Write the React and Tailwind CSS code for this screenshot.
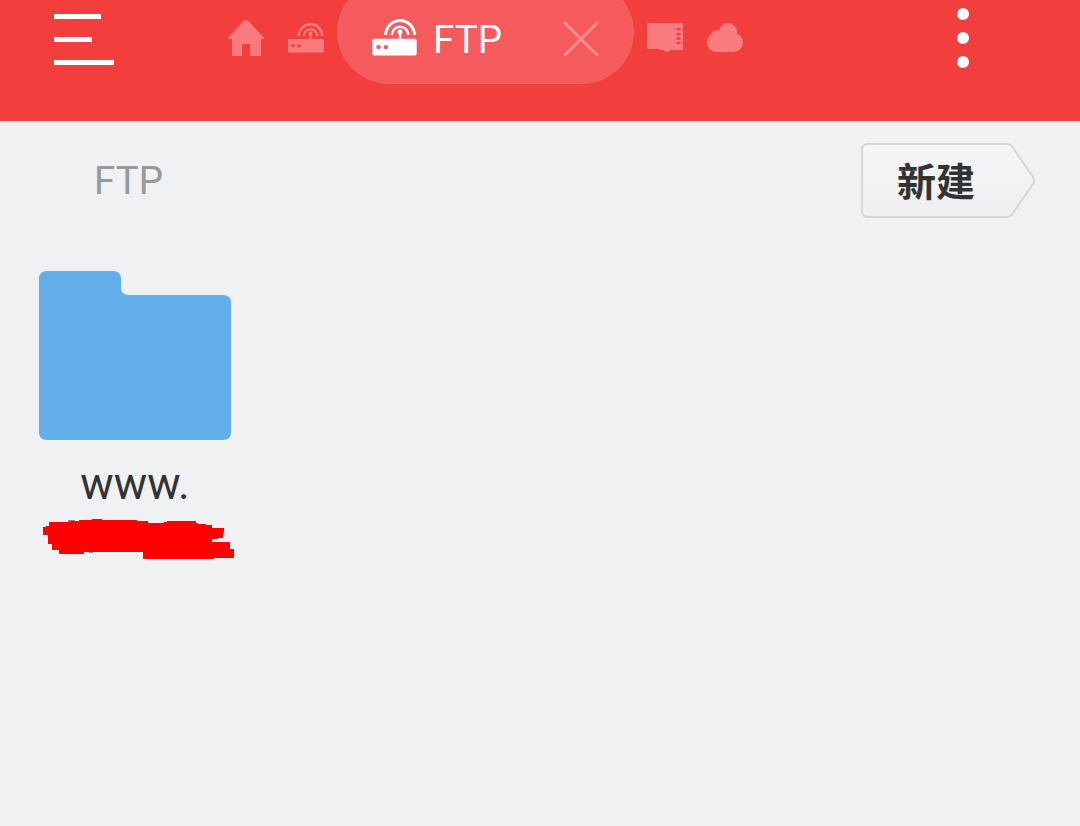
import React from 'react'

const FONT = "font-['Roboto','Noto_Sans_CJK_SC',sans-serif]"

function HomeIcon() {
  return (
    <svg width="38" height="38" viewBox="0 0 38 38" className="block" fill="#f97b7e">
      <path d="M19 1 Q20.5 1 22 2.5 L37 19 Q37.5 20 36 20 L34 20 L34 37 L23 37 L23 25 L15 25 L15 37 L5 37 L5 20 L2 20 Q0.5 20 1 19 L16 2.5 Q17.5 1 19 1 Z" />
    </svg>
  )
}

function RouterIcon({ width, height, className }) {
  return (
    <svg width={width} height={height} viewBox="0 0 36 30" className={`block ${className}`} fill="none">
      <rect x="0" y="16" width="36" height="13.5" rx="1.5" fill="currentColor" />
      <rect x="21.5" y="10" width="2" height="7" fill="currentColor" />
      <circle cx="22.5" cy="10.5" r="2" fill="currentColor" />
      <path d="M15.8 13 A6.7 6.7 0 0 1 29.2 13" stroke="currentColor" strokeWidth="2" />
      <path d="M10.8 13 A11.7 11.7 0 0 1 34.2 13" stroke="currentColor" strokeWidth="2.4" />
      <circle cx="5" cy="22.8" r="1.8" fill="var(--hole)" />
      <circle cx="11" cy="22.8" r="1.8" fill="var(--hole)" />
    </svg>
  )
}

function CardIcon() {
  return (
    <svg width="36" height="30" viewBox="0 0 36 30" className="block">
      <path d="M1.5 0 H34.5 Q36 0 36 1.5 V25.5 Q36 27 34.5 27 H23 L21.5 29 H19 L17 27 H13 L12 26 H1.5 Q0 26 0 24.5 V1.5 Q0 0 1.5 0 Z" fill="#f97b7e" />
      <g fill="#f33e3e">
        <rect x="29.5" y="5" width="4" height="2.2" />
        <rect x="29.5" y="10" width="4" height="2.2" />
        <rect x="29.5" y="14.5" width="4" height="2.2" />
        <rect x="29.5" y="19" width="4" height="2.2" />
      </g>
    </svg>
  )
}

function CloudIcon() {
  return (
    <svg width="36" height="30" viewBox="0 0 36 30" className="block" fill="#f97b7e">
      <rect x="0" y="10" width="36" height="19" rx="9.5" />
      <circle cx="21" cy="9" r="9" />
      <circle cx="10" cy="13.5" r="6.5" />
    </svg>
  )
}

function Header() {
  return (
    <header className="flex h-[121px] shrink-0 items-start overflow-hidden bg-[#f33e3e]">
      <div className="ml-[54px] mt-[14px] flex w-[60px] flex-col items-start gap-[18.5px]">
        <div className="h-[4.5px] w-[47px] bg-white" />
        <div className="h-[4.5px] w-[38px] bg-white" />
        <div className="h-[4.5px] w-[60px] bg-white" />
      </div>
      <div className="ml-[113px] mt-[19px]"><HomeIcon /></div>
      <div className="ml-[23px] mt-[23px] [--hole:#f33e3e]">
        <RouterIcon width={36} height={30} className="text-[#f97b7e]" />
      </div>
      <div className="-mt-[20px] ml-[13px] flex h-[104px] w-[297px] items-start rounded-[52px] border border-[#f56163] bg-[#f55b5d] pl-[34px]">
        <div className="mt-[38px] [--hole:#f55b5d]">
          <RouterIcon width={45} height={37} className="text-white" />
        </div>
        <span className={`${FONT} ml-[16px] mt-[36px] text-[38.5px] leading-[45px] text-white`}>FTP</span>
        <svg width="36" height="36" viewBox="0 0 36 36" className="ml-[61px] mt-[40px] block" stroke="#f98e8f" strokeWidth="2.8" strokeLinecap="round">
          <path d="M2 2 L34 34 M34 2 L2 34" />
        </svg>
      </div>
      <div className="ml-[13px] mt-[23px]"><CardIcon /></div>
      <div className="ml-[24px] mt-[23px]"><CloudIcon /></div>
      <div className="ml-[214px] mt-[8px] flex flex-col gap-[12px]">
        <div className="h-[12px] w-[12px] rounded-full bg-white" />
        <div className="h-[12px] w-[12px] rounded-full bg-white" />
        <div className="h-[12px] w-[12px] rounded-full bg-white" />
      </div>
    </header>
  )
}

function NewButton() {
  return (
    <button className="relative mr-[45px] mt-[22px] h-[75px] w-[174px] text-left">
      <svg width="174" height="75" viewBox="0 0 174 75" className="absolute inset-0 block">
        <defs>
          <linearGradient id="btn" x1="0" y1="0" x2="0" y2="1">
            <stop offset="0" stopColor="#f6f6f8" />
            <stop offset="1" stopColor="#eeeff1" />
          </linearGradient>
        </defs>
        <path d="M7 1 H146 Q149 1 151 3.5 L172 34 Q174 37.5 172 41 L151 71.5 Q149 74 146 74 H7 Q1 74 1 68 V7 Q1 1 7 1 Z" fill="url(#btn)" stroke="#d4d5d7" strokeWidth="1.8" />
      </svg>
      <span className={`${FONT} relative ml-[36px] block pt-[3px] text-[39px] font-bold leading-[75px] text-[#333]`}>新建</span>
    </button>
  )
}

function Folder() {
  return (
    <svg width="192" height="169" viewBox="0 0 192 169" className="block">
      <path d="M8 0 H74 Q82 0 82 8 V16 Q82 24 90 24 H184 Q192 24 192 32 V161 Q192 169 184 169 H8 Q0 169 0 161 V8 Q0 0 8 0 Z" fill="#63afe9" />
    </svg>
  )
}

function Scribble() {
  return (
    <svg width="192" height="42" viewBox="0 0 192 42" className="absolute left-[4px] top-[247px] block" shapeRendering="crispEdges">
      <path fill="#888" d="M25 2 H32 V4 H25 Z M46 33 H50 V35 H46 Z" />
      <path fill="#ff0000" d="M0 9 L6 8 V4 L24 4 L30 3 L55 1 L62 2 L82 2 L105 3 V5 H120 L125 3 H153 V5 L157 6 L169 7 V10 H181 L180 20 L169 21 V24 H187 V31 H191 V40 H171 V41 H100 V34 L77 34 L52 34 H41 V36 H16 V32 H9 V26 H5 V17 H0 Z" />
    </svg>
  )
}

export default function App() {
  return (
    <div className="flex h-[826px] w-[1080px] flex-col overflow-hidden bg-[#f0f1f3]">
      <Header />
      <main className="flex-1">
        <div className="flex items-start justify-between">
          <span className={`${FONT} ml-[94px] mt-[37px] text-[38.5px] leading-[45px] text-[#999]`}>FTP</span>
          <NewButton />
        </div>
        <div className="relative ml-[39px] mt-[53px] w-[192px]">
          <Folder />
          <div className={`${FONT} mt-[19px] text-center text-[44.5px] leading-[50px] text-[#333]`}>www.</div>
          <Scribble />
        </div>
      </main>
    </div>
  )
}
